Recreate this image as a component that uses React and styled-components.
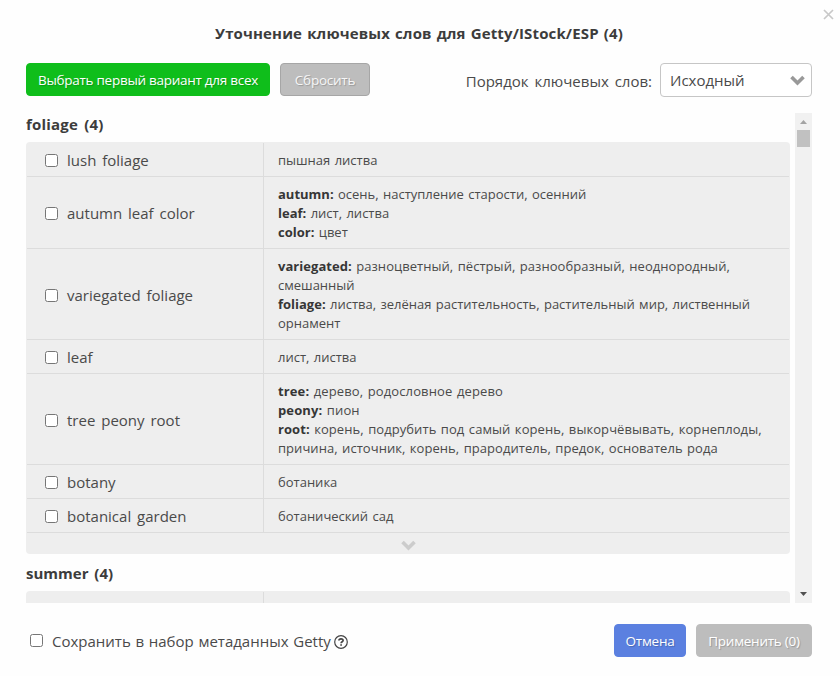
import React from "react";
import styled, { createGlobalStyle } from "styled-components";

const Global = createGlobalStyle`
  *, *::before, *::after { box-sizing: border-box; }
  body { margin: 0; background: #fefefe; color: #4a4a4a; font-family: "Open Sans", "Noto Sans", sans-serif; }
`;

const Dialog = styled.main`
  position: relative;
  display: flex;
  flex-direction: column;
  width: 840px;
  height: 676px;
  padding: 0 28px 0 26px;
  overflow: hidden;
`;

const Close = styled.button`
  position: absolute;
  top: 9px;
  right: 6px;
  display: flex;
  padding: 0;
  border: 0;
  background: none;
`;

const Title = styled.h1`
  margin: 22px 0 18px;
  font-size: 15px;
  line-height: 23px;
  font-weight: 700;
  text-align: center;
  color: #3c3c3c;
  word-spacing: 1px;
  letter-spacing: 0.14px;
`;

const Toolbar = styled.div`
  display: flex;
  align-items: flex-start;
  height: 34px;
  margin-bottom: 16px;
`;

const variants = {
  green: "background: #0fbe1b; border-color: #0fbe1b;",
  reset: "background: #bdbdbd; border-color: #a6a6a6;",
  blue: "background: #5b80e0; border-color: #5b80e0;",
  grey: "background: #bdbdbd; border-color: #bdbdbd;",
};

const Button = styled.button`
  width: ${(p) => p.$width}px;
  height: 33px;
  margin-right: ${(p) => p.$gap || 0}px;
  padding: 0;
  border: 1px solid;
  border-radius: 4px;
  font: 400 13.5px/20px "Open Sans", sans-serif;
  letter-spacing: ${(p) => p.$track || 0}px;
  white-space: nowrap;
  color: ${(p) => (p.$variant === "reset" ? "#f6f6f6" : "#fff")};
  text-shadow: 1px 1px 1px rgba(0, 0, 0, 0.2);
  ${(p) => variants[p.$variant]}
`;

const OrderLabel = styled.label`
  margin: 7px 8px 0 auto;
  font-size: 15px;
  line-height: 22px;
  word-spacing: 2px;
`;

const Select = styled.div`
  display: flex;
  align-items: center;
  justify-content: space-between;
  width: 152px;
  height: 34px;
  padding: 0 6px 0 9px;
  border: 1px solid #c6c6c6;
  border-radius: 4px;
  background: #fff;
  font-size: 15px;
`;

const Scroller = styled.section`
  display: flex;
  justify-content: space-between;
  height: 490px;
  overflow: hidden;
`;

const Groups = styled.div`
  width: 764px;
`;

const GroupTitle = styled.h2`
  margin: 0 0 7px;
  font-size: 15px;
  line-height: 22px;
  font-weight: 700;
  color: #3c3c3c;
  word-spacing: 2px;
  letter-spacing: ${(p) => p.$track || 0}px;
`;

const Table = styled.div`
  margin-bottom: 8px;
  padding: 1px;
  border-radius: 4px;
  background: #eee;
`;

const Row = styled.div`
  display: grid;
  grid-template-columns: 237px 1fr;
  min-height: 34px;
  border-bottom: 1px solid #dcdcdc;
`;

const Keyword = styled.label`
  display: flex;
  align-items: center;
  gap: 9px;
  padding: 1px 0 0 18px;
  border-right: 1px solid #dcdcdc;
  font-size: 15px;
  line-height: 20px;
  word-spacing: 2px;
`;

const Check = styled.input.attrs({ type: "checkbox" })`
  width: 13px;
  height: 13px;
  margin: ${(p) => p.$drop || 0}px 0 0;
`;

const Meaning = styled.div`
  padding: 8px 14px 6px;
  font-size: 13px;
  line-height: 19px;
  word-spacing: 1px;
`;

const Line = styled.div`
  white-space: nowrap;
  letter-spacing: ${(p) => p.$track || 0}px;
  b { font-weight: 700; color: #363636; }
`;

const More = styled.div`
  display: flex;
  justify-content: center;
  height: 20px;
  padding: 7px 0 0;
`;

const Scrollbar = styled.div`
  display: flex;
  flex-direction: column;
  align-items: center;
  width: 17px;
  height: 490px;
  background: #f1f1f1;
`;

const Arrow = styled.svg`
  flex: none;
  width: 17px;
  height: 17px;
`;

const Thumb = styled.div`
  width: 13px;
  height: 17px;
  margin-bottom: auto;
  background: #c1c1c1;
`;

const Footer = styled.footer`
  display: flex;
  align-items: center;
  height: 33px;
  margin-top: 21px;
`;

const Save = styled.label`
  display: flex;
  align-items: center;
  gap: 9px;
  margin: 0 auto 0 4px;
  font-size: 15px;
  line-height: 20px;
  white-space: nowrap;
  word-spacing: 0.8px;
`;

const SaveText = styled.span`
  display: flex;
  align-items: center;
  gap: 3px;
  padding-top: 1px;
`;

const Chevron = ({ color, w = 15, h = 11 }) => (
  <svg width={w} height={h} viewBox="0 0 15 11">
    <path d="M1.500 2 7.500 8 13.500 2" fill="none" stroke={color} strokeWidth="3.600" />
  </svg>
);

const HelpIcon = styled.svg`
  width: 14px;
  height: 14px;
  margin-top: 1px;
`;

const rows = [
  ["lush foliage", [["", "пышная листва"]]],
  ["autumn leaf color", [["autumn:", "осень, наступление старости, осенний"], ["leaf:", "лист, листва"], ["color:", "цвет"]]],
  ["variegated foliage", [
    ["variegated:", "разноцветный, пёстрый, разнообразный, неоднородный,", 0.05],
    ["", "смешанный"],
    ["foliage:", "листва, зелёная растительность, растительный мир, лиственный"],
    ["", "орнамент"],
  ]],
  ["leaf", [["", "лист, листва"]]],
  ["tree peony root", [
    ["tree:", "дерево, родословное дерево", 0.12],
    ["peony:", "пион", 0.12],
    ["root:", "корень, подрубить под самый корень, выкорчёвывать, корнеплоды,", 0.07],
    ["", "причина, источник, корень, прародитель, предок, основатель рода", 0.05],
  ]],
  ["botany", [["", "ботаника"]]],
  ["botanical garden", [["", "ботанический сад"]]],
];

export default function App() {
  return (
    <>
      <Global />
      <Dialog>
        <Close aria-label="Закрыть">
          <svg width="11" height="11" viewBox="0 0 11 11">
            <path d="M1 1 10 10M10 1 1 10" stroke="#c8c8c8" strokeWidth="1.700" />
          </svg>
        </Close>
        <Title>Уточнение ключевых слов для Getty/IStock/ESP (4)</Title>
        <Toolbar>
          <Button $variant="green" $width={244} $gap={10} $track={-0.27}>Выбрать первый вариант для всех</Button>
          <Button $variant="reset" $width={90} $track={-0.25}>Сбросить</Button>
          <OrderLabel>Порядок ключевых слов:</OrderLabel>
          <Select>
            <span>Исходный</span>
            <Chevron color="#999" />
          </Select>
        </Toolbar>
        <Scroller>
          <Groups>
            <GroupTitle $track={0.2}>foliage (4)</GroupTitle>
            <Table>
              {rows.map(([word, lines]) => (
                <Row key={word}>
                  <Keyword><Check $drop={1} />{word}</Keyword>
                  <Meaning>
                    {lines.map(([term, text, track]) => (
                      <Line key={text} $track={track}>{term && <b>{term} </b>}{text}</Line>
                    ))}
                  </Meaning>
                </Row>
              ))}
              <More><Chevron color="#ccc" /></More>
            </Table>
            <GroupTitle>summer (4)</GroupTitle>
            <Table>
              <Row>
                <Keyword />
                <Meaning />
              </Row>
            </Table>
          </Groups>
          <Scrollbar>
            <Arrow viewBox="0 0 17 17"><path d="M5 11h7L8.500 7z" fill="#a3a3a3" /></Arrow>
            <Thumb />
            <Arrow viewBox="0 0 17 17"><path d="M5 6h7L8.500 10z" fill="#505050" /></Arrow>
          </Scrollbar>
        </Scroller>
        <Footer>
          <Save>
            <Check />
            <SaveText>
              Сохранить в набор метаданных Getty
              <HelpIcon viewBox="0 0 14 14" fill="none" stroke="#444">
                <circle cx="7" cy="7" r="6.300" strokeWidth="1.200" />
                <path d="M4.900 5.500C5 3.300 9.100 3.300 9.100 5.400 9.100 6.800 7.100 6.700 7.100 8.300M7.100 9.300v1.500" strokeWidth="1.700" />
              </HelpIcon>
            </SaveText>
          </Save>
          <Button $variant="blue" $width={72} $gap={10} $track={-0.25}>Отмена</Button>
          <Button $variant="grey" $width={116} $track={-0.25}>Применить (0)</Button>
        </Footer>
      </Dialog>
    </>
  );
}
